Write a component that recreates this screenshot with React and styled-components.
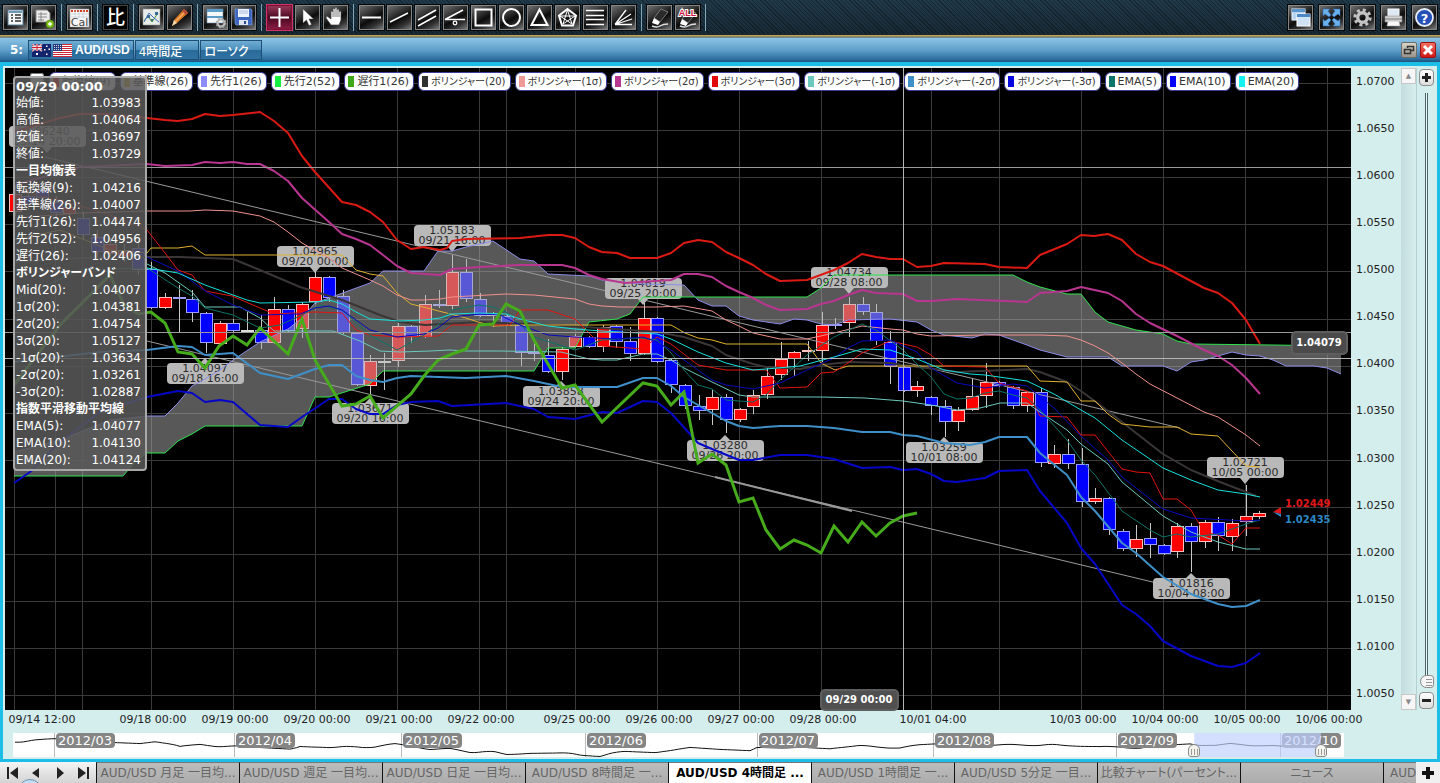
import { useState } from 'react';
import styled, { createGlobalStyle, css } from 'styled-components';

const FONT = `"DejaVu Sans", "Noto Sans CJK JP", sans-serif`;

const GlobalStyle = createGlobalStyle`
  * { box-sizing: border-box; }
  body {
    margin: 0;
    background: #1b2a35;
    font-family: ${FONT};
    font-feature-settings: "palt";
    font-size: 12px;
  }
  button, input { font-family: inherit; font-feature-settings: inherit; }
`;

const Page = styled.div`
  display: flex;
  flex-direction: column;
  overflow: hidden;
`;
const Toolbar = styled.header`
  display: flex;
  justify-content: space-between;
  height: 38px;
  padding: 4px 2px 0;
  background:
    linear-gradient(transparent 34px, #1a2830 34px, #1a2830 35px, #b99a50 35px, #c8a95e 36px, #59625c 37px, #7fb0cc 38px),
    repeating-linear-gradient(45deg, rgba(0, 0, 0, 0.3) 0 1px, transparent 1px 3px),
    linear-gradient(#213b4b, #172833);
`;
const ToolGroup = styled.div`
  display: flex;
  gap: ${p => p.$gap}px;
`;
const ToolButton = styled.button`
  width: 27px;
  height: 27px;
  padding: 0;
  border: 1px solid #06090b;
  box-shadow: inset 0 0 0 1px #858585;
  background: linear-gradient(150deg, #777 0%, #2b2b2b 40%, #0c0c0c 55%, #333 75%, #888 100%);
  svg { display: block; width: 25px; height: 25px; }
  ${p => p.$black && css`
    background: #000;
    box-shadow: inset 0 0 0 1px #444;
    color: #fff;
    font-size: 19px;
    font-weight: 500;
    line-height: 23px;
  `}
  ${p => p.$active && css`
    border-color: #d0356a;
    box-shadow: inset 0 0 0 1px #7c0d35;
    background: linear-gradient(#9c3c5c, #4a0820 50%, #8f1e46);
  `}
`;
const Separator = styled.span`
  width: 7px;
  height: 27px;
  background: linear-gradient(90deg, transparent 3px, #7ea6b8 3px, #7ea6b8 4px, transparent 4px);
`;
const TitleBar = styled.div`
  display: flex;
  align-items: center;
  height: 24px;
  padding: 0 4px 0 10px;
  background: linear-gradient(#8cc4e4, #5f9fca 50%, #2a6c9c 90%, #1d5078);
`;
const WindowNumber = styled.strong`
  width: 18px;
  color: #fff;
`;
const TitleButton = styled.button`
  display: flex;
  align-items: center;
  gap: 2px;
  height: 20px;
  margin-right: 1px;
  padding: 0 ${p => p.$end}px 0 3px;
  border: 1px solid #1f4f74;
  background: linear-gradient(#6fadd3, #4b8fbd 50%, #2a6a99 51%, #2f73a3);
  color: #fff;
  font-size: 12px;
  font-weight: 500;
  white-space: nowrap;
  b { font-family: "Liberation Sans", sans-serif; font-size: 12px; }
`;
const WindowControls = styled.div`
  display: flex;
  gap: 3px;
  margin-left: auto;
`;
const WindowButton = styled.button`
  width: 16px;
  height: 16px;
  padding: 0;
  border: 1px solid ${p => (p.$close ? '#a01010' : '#6d6d6d')};
  border-radius: 2px;
  background: ${p => (p.$close ? 'linear-gradient(#f07060, #d01818)' : 'linear-gradient(#d8d4c8, #98948c)')};
  svg { display: block; }
`;
const Frame = styled.main`
  padding: 4px 3px 3px;
  background: #1cbde6;
`;
const Body = styled.div`
  padding: 2px 0 2px 2px;
  background: #d4eded;
`;
const ChartRow = styled.div`
  display: flex;
`;
const ChartPane = styled.section`
  position: relative;
  flex: 1;
  min-width: 0;
`;
const ChartSvg = styled.svg`
  display: block;
  width: 100%;
  height: auto;
  overflow: visible;
  font-family: ${FONT};
`;
const Legend = styled.div`
  position: absolute;
  top: 4px;
  left: 25px;
  display: flex;
  gap: 4px;
`;
const LegendToggle = styled.input`
  width: 14px;
  height: 14px;
  margin: 1px 1px 0 0;
`;
const LegendItem = styled.span`
  display: flex;
  align-items: center;
  gap: 3px;
  height: 19px;
  padding: 0 4px 0 3px;
  border: 1px solid #3c3c9c;
  border-radius: 6px;
  background: #fff;
  color: #333;
  font-size: ${p => (p.$compact ? 10 : 11)}px;
  line-height: 17px;
  white-space: nowrap;
  &::before {
    content: "";
    width: 6px;
    height: 11px;
    background: ${p => p.$color};
  }
`;
const DataPanel = styled.div`
  position: absolute;
  top: 8px;
  left: 8px;
  width: 134px;
  padding: 0 4px 0 1px;
  border: 2px solid #a8a8a8;
  border-radius: 4px;
  background: rgba(88, 88, 88, 0.87);
  color: #fff;
  line-height: 17px;
`;
const DataTime = styled.div`
  font-size: 13px;
  font-weight: bold;
  white-space: nowrap;
`;
const DataTable = styled.table`
  width: 100%;
  border-collapse: collapse;
  th, td { height: 17px; padding: 0; line-height: 17px; white-space: nowrap; }
  th { font-weight: normal; text-align: left; }
  th[colspan] { font-weight: bold; }
  td { text-align: right; }
`;
const SideColumn = styled.aside`
  display: grid;
  grid-template-columns: 50px 16px 20px;
  margin-bottom: 20px;
`;
const PriceScale = styled.div`
  display: flex;
  flex-direction: column;
  justify-content: space-between;
  padding: 7px 0 9px 5px;
  color: #222;
  font-size: 11px;
  line-height: 14px;
`;
const ScrollTrack = styled.div`
  display: flex;
  flex-direction: column;
  justify-content: space-between;
  border-right: 1px solid #b5d0d2;
  background: linear-gradient(90deg, #c3dcde, #d8eeee);
`;
const ScrollButton = styled.button`
  height: 16px;
  padding: 0;
  border: 1px solid #c8c8c8;
  background: #f6f6f6;
  color: #888;
  font-size: 7px;
  line-height: 14px;
`;
const ZoomColumn = styled.div`
  display: flex;
  flex-direction: column;
  align-items: center;
  padding: 1px 1px 1px 0;
`;
const ZoomButton = styled.button`
  width: 15px;
  height: 17px;
  padding: 0;
  border: 1px solid #8c8c8c;
  border-radius: 4px;
  background: linear-gradient(#fff, #ddd);
  svg { display: block; margin: auto; }
`;
const ZoomSlider = styled.input`
  flex: 1;
  width: 15px;
  min-height: 0;
  margin: 7px 0 4px;
  appearance: none;
  background: linear-gradient(90deg, transparent 6px, #4c6466 6px, #4c6466 7px, #e8f8f8 7px, #e8f8f8 8px, #4c6466 8px, #4c6466 9px, transparent 9px);
  writing-mode: vertical-lr;
  direction: rtl;
  &::-webkit-slider-thumb {
    appearance: none;
    width: 14px;
    height: 13px;
    border: 1px solid #888;
    border-radius: 8px 4px 4px 8px;
    background:
      repeating-linear-gradient(transparent 0 2px, #999 2px 3px) 5px 1px / 6px 9px no-repeat,
      #f6f6f6;
  }
`;
const Navigator = styled.div`
  position: relative;
  margin: 3px 93px 0 8px;
  svg { display: block; width: 100%; height: auto; background: #fff; }
`;
const RangeHandle = styled.input`
  position: absolute;
  bottom: 0;
  left: 0;
  width: 100%;
  height: 14px;
  margin: 0;
  appearance: none;
  background: none;
  pointer-events: none;
  &::-webkit-slider-thumb {
    appearance: none;
    width: 12px;
    height: 13px;
    border: 1px solid #888;
    border-radius: 6px 6px 3px 3px;
    background:
      repeating-linear-gradient(90deg, #999 0 1px, transparent 1px 3px) 2px 4px / 7px 6px no-repeat,
      #f4f4ec;
    pointer-events: auto;
  }
`;
const TabBar = styled.nav`
  position: relative;
  display: flex;
  height: 21px;
  overflow: hidden;
  background: #b4b4b4;
`;
const Pager = styled.div`
  display: flex;
  flex: 0 0 96px;
  background: linear-gradient(#f4f4f4, #d4d4d4);
`;
const PagerButton = styled.button`
  width: 24px;
  padding: 0;
  border: 0;
  background: none;
  svg { display: block; margin: auto; }
`;
const Tab = styled.button`
  flex: 0 0 143px;
  padding: 0 2px;
  border: 0;
  border-top: 1px solid #777;
  border-left: 1px solid #111;
  background: ${p => (p.$active ? '#fff' : 'linear-gradient(#bcbcbc, #acacac)')};
  color: ${p => (p.$active ? '#000' : '#666')};
  font-size: 12px;
  font-weight: ${p => (p.$active ? 'bold' : 'normal')};
  line-height: 18px;
  white-space: nowrap;
  overflow: hidden;
`;
const TabSpill = styled(Tab)`
  flex: 1 1 32px;
  min-width: 0;
  padding-left: 6px;
  text-align: left;
`;
const AddTab = styled.button`
  flex: 0 0 24px;
  padding: 0;
  border: 0;
  background: #f0f0f0;
  svg { display: block; margin: auto; }
`;
const RoundKnob = styled.button`
  position: absolute;
  top: 17px;
  left: 18px;
  width: 24px;
  height: 24px;
  padding: 0;
  border: 1px solid #6f93b4;
  border-radius: 50%;
  background: #c4dcf0;
`;

const GRID_X = [14, 55, 82, 151, 233, 315, 397, 479, 506, 575, 657, 739, 821, 931, 999, 1081, 1163, 1245, 1327];
const PRICES = Array.from({ length: 14 }, (_, i) => (1.07 - i * 0.005).toFixed(4));
const priceY = i => Math.round(83 + i * 47.1);

const TIMES = [
  [42, '09/14 12:00'], [153, '09/18 00:00'], [235, '09/19 00:00'], [317, '09/20 00:00'],
  [399, '09/21 00:00'], [481, '09/22 00:00'], [577, '09/25 00:00'], [659, '09/26 00:00'],
  [741, '09/27 00:00'], [823, '09/28 00:00'], [933, '10/01 04:00'], [1083, '10/03 00:00'],
  [1165, '10/04 00:00'], [1247, '10/05 00:00'], [1329, '10/06 00:00'],
];

// direction, body top, body bottom, high, low
const CANDLES = [
  ['r', 194, 212, 186, 216], ['b', 196, 204, 190, 210], ['b', 190, 198, 184, 204], ['b', 202, 213, 196, 218],
  ['r', 207, 214, 200, 220], ['b', 218, 235, 212, 240], ['b', 237, 252, 230, 258], ['r', 244, 254, 238, 260],
  ['r', 250, 257, 244, 262], ['b', 248, 270, 240, 275],
  ['b', 269, 308, 262, 309], ['r', 297, 308, 293, 309], ['b', 297, 299, 285, 332], ['b', 299, 313, 290, 322],
  ['b', 313, 343, 312, 353], ['r', 323, 344, 321, 346], ['b', 323, 331, 319, 333], ['w', 330, 331, 312, 333],
  ['b', 330, 343, 315, 349], ['r', 309, 343, 297, 344], ['b', 309, 331, 305, 333], ['r', 304, 329, 302, 338],
  ['r', 277, 302, 270, 304], ['b', 277, 298, 276, 302], ['b', 296, 333, 290, 334], ['b', 333, 385, 333, 386],
  ['r', 361, 386, 355, 396], ['w', 361, 362, 353, 390], ['r', 326, 361, 323, 367], ['b', 326, 337, 325, 343],
  ['r', 304, 337, 295, 338], ['b', 304, 306, 290, 308], ['r', 272, 306, 255, 310], ['b', 272, 299, 259, 302],
  ['b', 299, 316, 293, 317], ['w', 314, 315, 312, 327], ['b', 316, 323, 315, 325], ['b', 325, 353, 324, 366],
  ['b', 352, 354, 342, 361], ['b', 355, 372, 339, 373], ['r', 349, 372, 347, 380], ['r', 336, 347, 334, 348],
  ['b', 337, 347, 336, 348], ['r', 327, 347, 325, 352], ['b', 326, 342, 325, 348], ['b', 341, 354, 327, 361],
  ['r', 318, 354, 303, 355], ['b', 318, 362, 317, 363], ['b', 360, 385, 359, 393], ['b', 385, 406, 384, 409],
  ['b', 406, 411, 395, 420], ['r', 397, 410, 390, 425], ['b', 397, 420, 394, 433], ['r', 409, 420, 408, 422],
  ['r', 395, 407, 390, 414], ['r', 376, 395, 368, 399], ['r', 359, 375, 342, 380], ['r', 352, 359, 351, 376],
  ['r', 350, 352, 341, 361], ['r', 325, 351, 312, 362], ['b', 324, 326, 318, 329], ['r', 304, 323, 297, 337],
  ['b', 304, 312, 297, 315], ['b', 312, 341, 304, 345], ['b', 342, 367, 331, 384], ['b', 367, 391, 366, 392],
  ['r', 386, 391, 381, 397], ['b', 397, 406, 396, 415], ['b', 406, 422, 400, 437], ['r', 410, 422, 407, 431],
  ['r', 396, 410, 378, 411], ['r', 382, 396, 363, 408], ['b', 382, 386, 381, 387], ['b', 387, 406, 386, 409],
  ['r', 392, 406, 391, 412], ['b', 392, 463, 388, 467], ['r', 454, 464, 445, 468], ['b', 454, 464, 439, 469],
  ['b', 464, 502, 448, 507], ['r', 498, 502, 488, 504], ['b', 498, 530, 497, 535], ['b', 531, 549, 529, 551],
  ['r', 539, 549, 525, 557], ['b', 538, 545, 523, 558], ['b', 545, 554, 544, 555], ['r', 526, 552, 523, 558],
  ['b', 526, 542, 523, 572], ['r', 522, 542, 520, 548], ['b', 522, 536, 517, 551], ['r', 523, 537, 519, 551],
  ['r', 516, 522, 485, 536], ['r', 513, 517, 511, 519],
];
const CANDLE_COLORS = {
  r: ['#ff0000', '#ffc0c0'],
  b: ['#0000ff', '#9c9cff'],
  w: ['#ffffff', '#dddddd'],
};
const candleX = i => Math.round(14.5 + i * 13.68);

const SPAN_A = '14,452 60,440 110,420 147,416 165,416 178,403 192,386 205,379 220,370 233,360 260,342 288,329 302,318 315,303 329,298 370,283 383,271 424,271 438,251 452,251 466,247 493,241 520,259 534,261 548,274 589,276 602,280 643,284 684,285 698,300 712,306 726,306 739,316 753,320 780,324 794,319 807,320 821,324 834,325 848,320 890,319 917,322 931,330 944,335 972,338 985,334 999,335 1027,345 1040,350 1067,357 1108,357 1122,366 1163,366 1177,371 1191,362 1204,360 1232,352 1246,355 1260,356 1273,360 1286,366 1314,366 1327,368 1341,374';
const SPAN_B = '14,476 123,476 135,462 147,453 165,453 178,441 192,434 205,426 302,426 315,397 329,397 370,384 383,371 534,371 548,348 575,348 589,322 617,319 630,314 643,297 807,297 821,288 834,275 1013,275 1027,282 1040,287 1067,294 1081,294 1095,312 1108,322 1136,330 1163,334 1177,341 1191,344 1273,345 1341,346';
const CLOUD = `${SPAN_A} ${SPAN_B.split(' ').reverse().join(' ')}`;

// colour, stroke width, points
const LINES = [
  ['#8c8ce8', 1, SPAN_A],
  ['#2fe04c', 1, SPAN_B],
  ['#3a3636', 2, '14,262 80,258 147,257 180,257 233,259 260,270 300,287 342,300 380,315 400,322 425,325 480,322 550,325 600,328 630,330 657,332 684,337 712,346 726,355 753,364 766,367 800,369 821,365 848,362 890,363 917,367 944,370 957,372 1027,369 1040,372 1067,382 1081,391 1108,411 1136,433 1163,454 1191,470 1220,482 1246,492 1256,496'],
  ['#e0b030', 1, '14,240 60,230 110,250 147,253 151,248 178,248 192,246 205,255 342,255 356,270 370,274 383,276 397,293 411,304 431,309 466,318 478,322 493,326 520,325 671,325 685,333 698,338 712,340 726,344 807,344 821,363 835,370 848,366 1027,366 1040,381 1067,382 1081,401 1095,401 1108,414 1122,424 1150,427 1177,427 1191,434 1218,436 1232,451 1246,466 1260,467'],
  ['#e01410', 1, '14,190 60,200 110,215 147,230 165,253 178,270 192,275 205,291 232,296 260,308 274,314 315,312 342,313 356,330 370,335 400,337 438,336 452,325 510,325 520,310 548,310 575,319 589,333 602,346 643,349 657,337 671,344 698,365 726,370 766,370 780,388 807,387 821,373 834,372 848,363 862,353 890,341 917,347 931,355 944,366 985,367 999,383 1027,391 1040,416 1067,417 1081,435 1095,435 1122,469 1136,472 1150,473 1163,499 1177,499 1191,510 1204,532 1218,535 1232,544 1246,528 1260,528'],
  ['#f0918c', 1, '14,218 80,213 147,211 190,211 205,210 233,211 260,216 274,222 288,232 302,243 329,258 342,268 370,280 383,286 397,295 411,300 424,300 440,299 452,297 470,296 506,294 534,295 575,299 589,304 602,306 620,307 657,307 684,306 712,311 726,320 739,326 753,333 780,339 807,339 834,333 862,326 890,329 903,330 917,334 931,336 985,335 1040,335 1067,336 1081,340 1095,346 1108,353 1122,363 1136,374 1150,384 1204,412 1218,417 1232,426 1246,435 1260,446'],
  ['#b83590', 2, '14,185 80,167 147,164 165,166 192,165 205,162 220,163 233,162 247,164 260,164 274,171 288,181 302,198 329,222 342,234 356,239 370,245 383,255 397,266 411,273 440,275 452,269 480,267 520,265 562,265 575,268 589,275 602,279 625,283 671,280 684,274 698,274 712,277 726,286 739,292 753,298 766,305 780,310 807,309 821,304 834,301 848,295 862,290 876,293 903,294 917,301 931,301 957,299 1027,302 1040,293 1067,291 1081,287 1108,293 1122,301 1136,314 1150,323 1177,336 1204,350 1218,356 1232,365 1246,378 1260,394'],
  ['#dc1a14', 2, '14,132 60,118 80,114 110,114 147,118 165,120 178,121 192,119 205,114 220,116 233,115 260,112 274,121 288,133 302,156 315,172 342,202 356,205 370,212 383,222 397,240 411,249 424,247 440,250 447,248 452,241 466,239 520,238 548,235 562,235 575,238 589,247 602,252 617,253 630,258 657,258 671,253 684,243 698,240 712,242 726,252 739,258 753,265 766,274 780,281 807,280 834,270 848,263 862,254 876,257 890,259 903,259 917,267 931,266 944,263 985,264 999,267 1027,268 1040,255 1067,244 1081,235 1094,236 1108,234 1122,240 1136,254 1150,262 1163,266 1204,288 1218,293 1232,303 1246,320 1260,344'],
  ['#6cc8bc', 1, '147,264 165,273 192,292 205,307 240,307 260,318 274,331 333,331 360,341 380,351 400,352 430,351 450,350 466,351 500,351 561,352 589,359 602,360 617,360 643,354 657,354 671,360 684,368 712,382 739,395 753,397 820,397 865,398 903,401 931,405 957,410 980,408 1000,403 1027,403 1040,412 1067,430 1081,444 1108,464 1122,482 1163,516 1191,532 1218,542 1246,549 1260,549'],
  ['#0c7468', 1, '14,300 80,270 147,268 178,288 192,296 205,308 233,315 260,328 280,325 300,316 320,305 342,310 370,335 397,350 424,335 438,325 452,310 479,305 493,307 506,312 534,337 575,350 602,340 640,338 657,340 671,353 684,370 698,385 712,389 726,400 753,402 766,395 780,380 807,355 834,337 862,324 876,330 903,350 917,364 931,377 944,394 957,399 970,398 985,393 999,391 1013,395 1027,398 1040,410 1067,440 1081,460 1095,475 1122,511 1150,530 1163,537 1177,534 1191,537 1218,534 1246,524 1260,520'],
  ['#0808c0', 1, '147,257 180,272 205,291 233,305 260,315 300,314 315,308 329,306 342,310 370,330 397,337 424,334 438,328 452,317 480,314 500,315 520,325 548,335 575,337 617,339 643,337 657,342 671,350 684,360 698,370 712,380 726,385 753,389 780,383 807,370 834,358 848,348 862,341 890,340 917,352 931,368 957,383 985,388 1013,384 1027,386 1054,408 1081,436 1108,460 1122,477 1163,509 1191,518 1246,521 1260,520'],
  ['#16e0dc', 1, '147,268 178,273 205,285 247,300 260,303 315,302 329,300 342,304 356,312 370,319 400,321 424,320 440,318 452,314 480,313 506,314 520,319 548,326 575,329 602,331 657,334 671,339 698,352 726,363 753,370 766,369 800,366 834,357 862,349 890,350 917,359 944,370 970,374 985,375 1027,381 1054,394 1081,410 1095,418 1122,440 1163,468 1191,480 1218,490 1246,494 1260,497'],
  ['#3f8fc8', 2, '14,362 100,352 147,350 178,346 192,347 205,355 233,353 260,373 288,379 315,369 329,365 342,365 356,376 370,380 383,382 397,378 411,376 466,378 506,376 534,381 562,387 617,387 643,378 657,378 671,386 684,397 712,413 726,421 739,426 753,428 780,426 807,426 834,428 862,432 890,432 903,435 917,436 944,443 970,445 985,442 999,437 1027,437 1040,453 1067,475 1081,497 1095,511 1122,543 1136,553 1163,577 1191,594 1218,604 1232,607 1246,606 1260,600'],
  ['#0606c8', 2, '14,483 30,472 60,442 100,412 147,397 178,391 192,393 205,402 220,400 233,402 260,425 288,427 302,417 329,399 342,399 356,409 370,414 383,414 397,405 411,402 438,401 452,406 506,403 534,409 548,417 575,419 602,412 617,413 643,401 657,402 671,413 698,443 712,449 739,460 753,460 780,455 807,455 834,459 862,468 890,467 903,470 917,469 931,474 944,481 957,482 985,478 999,471 1027,470 1040,491 1067,523 1081,548 1095,564 1122,605 1136,614 1150,626 1163,641 1191,656 1218,666 1232,667 1246,663 1260,653'],
];
const LAGGING = '14,385 60,325 85,300 110,275 124,305 138,314 151,312 165,323 178,352 192,354 205,368 219,346 233,336 247,345 260,328 288,354 302,319 315,360 342,406 356,404 370,396 383,418 411,394 424,376 438,360 452,354 466,349 479,325 493,324 506,304 520,311 534,340 562,388 575,385 602,422 643,383 657,386 671,405 684,392 698,463 712,454 726,465 739,502 753,498 766,530 780,549 794,540 807,545 821,553 834,526 848,542 862,522 876,536 890,523 903,516 917,513';

// centre x, top, tip below the box, price, time
const CALLOUTS = [
  [47, 126, true, '1.06240', '09/14 20:00'],
  [315, 246, true, '1.04965', '09/20 00:00'],
  [452, 225, true, '1.05183', '09/21 16:00'],
  [643, 278, true, '1.04619', '09/25 20:00'],
  [849, 267, true, '1.04734', '09/28 08:00'],
  [1245, 457, true, '1.02721', '10/05 00:00'],
  [205, 363, false, '1.04097', '09/18 16:00'],
  [370, 403, false, '1.03671', '09/20 16:00'],
  [561, 386, false, '1.03858', '09/24 20:00'],
  [725, 440, false, '1.03280', '09/26 20:00'],
  [944, 442, false, '1.03259', '10/01 08:00'],
  [1191, 578, false, '1.01816', '10/04 08:00'],
];

const LEGEND = [
  ['#ff0000', '転換線(9)'], ['#e0b030', '基準線(26)'], ['#8c8cff', '先行1(26)'], ['#16f040', '先行2(52)'],
  ['#40a818', '遅行1(26)'], ['#303030', 'ボリンジャー(20)'], ['#f09a98', 'ボリンジャー(1σ)'], ['#b83590', 'ボリンジャー(2σ)'],
  ['#e00808', 'ボリンジャー(3σ)'], ['#6cc8bc', 'ボリンジャー(-1σ)'], ['#3f8fc8', 'ボリンジャー(-2σ)'], ['#0606e0', 'ボリンジャー(-3σ)'],
  ['#0c7468', 'EMA(5)'], ['#0000ff', 'EMA(10)'], ['#16f0f0', 'EMA(20)'],
];

const READOUT = [
  ['始値:', '1.03983'], ['高値:', '1.04064'], ['安値:', '1.03697'], ['終値:', '1.03729'],
  ['一目均衡表'],
  ['転換線(9):', '1.04216'], ['基準線(26):', '1.04007'], ['先行1(26):', '1.04474'], ['先行2(52):', '1.04956'], ['遅行(26):', '1.02406'],
  ['ボリンジャーバンド'],
  ['Mid(20):', '1.04007'], ['1σ(20):', '1.04381'], ['2σ(20):', '1.04754'], ['3σ(20):', '1.05127'],
  ['-1σ(20):', '1.03634'], ['-2σ(20):', '1.03261'], ['-3σ(20):', '1.02887'],
  ['指数平滑移動平均線'],
  ['EMA(5):', '1.04077'], ['EMA(10):', '1.04130'], ['EMA(20):', '1.04124'],
];

const MONTHS = [[54, '2012/03'], [234, '2012/04'], [401, '2012/05'], [585, '2012/06'], [757, '2012/07'], [933, '2012/08'], [1116, '2012/09'], [1280, '2012/10']];
const NAV_KNOTS = [[15, 742], [40, 740], [55, 739], [62, 742], [80, 740], [110, 743], [140, 744], [155, 742], [170, 744], [180, 747], [200, 744], [215, 746], [260, 747], [290, 749], [300, 746], [330, 747], [375, 747], [395, 744], [410, 746], [430, 749], [450, 749], [470, 752], [495, 752], [507, 754], [530, 753], [560, 753], [585, 755], [600, 756], [625, 751], [655, 752], [690, 748], [720, 750], [750, 751], [757, 748], [800, 747], [830, 749], [860, 746], [900, 748], [920, 745], [935, 744], [1000, 745], [1040, 745], [1065, 745], [1100, 747], [1120, 747], [1140, 748], [1160, 746], [1190, 744], [1215, 746], [1230, 744], [1250, 745], [1290, 747], [1300, 748], [1320, 746]];
const navLine = NAV_KNOTS.slice(1).flatMap(([x, y], i) => {
  const [px, py] = NAV_KNOTS[i];
  const steps = Math.max(1, Math.round((x - px) / 4));
  return Array.from({ length: steps }, (_, s) => {
    const nx = px + ((x - px) * s) / steps;
    const ny = py + ((y - py) * s) / steps + Math.sin(nx * 1.7) * 0.6;
    return `${nx.toFixed(1)},${ny.toFixed(1)}`;
  });
}).join(' ');

const TABS = ['AUD/USD 月足 一目均...', 'AUD/USD 週足 一目均...', 'AUD/USD 日足 一目均...', 'AUD/USD 8時間足 一...', 'AUD/USD 4時間足 ...', 'AUD/USD 1時間足 一...', 'AUD/USD 5分足 一目...', '比較チャート(パーセント...', 'ニュース'];

const eraser = y => (
  <>
    <path d={`M7 ${y + 9}L14 ${y}L21 ${y + 3}L13 ${y + 13}Z`} fill="#2a2a2a" stroke="#999" strokeWidth=".7" />
    <path d={`M7 ${y + 9}l6 4-2 3-6-2Z`} fill="#fff" />
    <path d="M5 21q5 2 8 0t8-2" fill="none" stroke="#ddd" strokeWidth="1.4" />
  </>
);

const ICONS = {
  list: (
    <>
      <rect x="5" y="5" width="15" height="15" fill="#f4f8fa" stroke="#5c8098" />
      <path d="M6 6h13v2H6Z" fill="#6d98b4" />
      <path d="M8 10h2M8 13h2M8 16h2M12 10h6M12 13h6M12 16h6" stroke="#333" strokeWidth="1.3" />
    </>
  ),
  addSheet: (
    <>
      <path d="M5 5h11l3 3v9H5Z" fill="#ececec" stroke="#888" />
      <path d="M7 9h9M7 12h9M7 15h6M10 7v9" stroke="#888" />
      <circle cx="19" cy="19" r="4" fill="#7dc01c" stroke="#4d8208" strokeWidth=".6" />
      <path d="M19 17v4M17 19h4" stroke="#fff" strokeWidth="1.3" />
    </>
  ),
  calendar: (
    <>
      <rect x="3" y="4" width="19" height="18" fill="#f8f8f8" stroke="#999" strokeWidth=".6" />
      <path d="M4 6h17" stroke="#d04020" strokeWidth="2" strokeDasharray="2 1" />
      <path d="M4 9h17M4 12h17M8 5v8M12 5v8M16 5v8" stroke="#b8c4cc" strokeWidth=".6" />
      <text x="12.5" y="21" textAnchor="middle" fontSize="11" fill="#444">Cal</text>
    </>
  ),
  compareLines: (
    <>
      <rect x="4" y="4" width="17" height="16" fill="#e8ece8" stroke="#999" strokeWidth=".6" />
      <path d="M5 16l4-5 4 6 6-9" fill="none" stroke="#4a9a28" />
      <path d="M5 17l5-9 4 4 6 5" fill="none" stroke="#446ab8" />
      <path d="M8 10h3v3H8ZM12 14h2v2h-2ZM16 7h3v3h-3Z" fill="#3a6a9a" />
    </>
  ),
  pencil: (
    <>
      <path d="M5 21l2-6L17 4l4 4L10 18Z" fill="#d87828" />
      <path d="M8.500 16.500L19 6" stroke="#f4b060" strokeWidth="1.5" />
      <path d="M15 6l4 4 2-2-4-4Z" fill="#b84838" />
      <path d="M5 21l2-6 3 3Z" fill="#f0d8b0" />
    </>
  ),
  sheetGear: (
    <>
      <rect x="4" y="4" width="16" height="14" fill="#f4f8fc" stroke="#789" strokeWidth=".6" />
      <path d="M4 4h16v3H4ZM4 11h16v2H4Z" fill="#5e9cc8" />
      <circle cx="18" cy="18" r="3.500" fill="none" stroke="#bbb" strokeWidth="2.200" />
      <circle cx="18" cy="18" r="4.600" fill="none" stroke="#aaa" strokeWidth="1.500" strokeDasharray="1.800 1.800" />
    </>
  ),
  save: (
    <>
      <path d="M4 4h16l1 1v15H5l-1-1Z" fill="#3c66c0" stroke="#88a8e0" strokeWidth=".6" />
      <rect x="7" y="4" width="11" height="8" fill="#eef4fc" />
      <path d="M8 6h9M8 8h9" stroke="#9cb4d8" strokeWidth=".8" />
      <rect x="8" y="15" width="9" height="5" fill="#dde4f0" />
      <rect x="13" y="16" width="2" height="3" fill="#2a4a90" />
    </>
  ),
  cross: <path d="M12.500 3v19M3 12.500h19" stroke="#fff" strokeWidth="2" />,
  pointer: <path d="M8 4v14l3.500-3 2.500 5.500 2.500-1-2.500-5.500h4.500Z" fill="#fff" stroke="#555" strokeWidth=".5" />,
  hand: <path d="M8 20l-5-7c0-1.500 1.500-1.800 2.500-.8L8 14V7c0-1.500 2-1.500 2 0V4.500c0-1.500 2-1.500 2 0v-.8c0-1.500 2-1.500 2 0V5c0-1.500 2-1.500 2 0v2c0-1.500 2-1.500 2 0v8l-2 5Z M10 7v5M12 5v7M14 5v7M16 7v5" fill="#fff" stroke="#444" strokeWidth=".7" />,
  hline: <path d="M3 12.500h19" stroke="#fff" strokeWidth="2" />,
  trend: <path d="M3 17L21 8" stroke="#fff" strokeWidth="1.500" />,
  channel: <path d="M3 15L21 5M3 21L21 11" stroke="#fff" strokeWidth="1.500" />,
  angle: (
    <>
      <path d="M2 14.500h20M2 14.500L20 5" stroke="#fff" strokeWidth="1.500" />
      <circle cx="12" cy="18" r="1.800" fill="none" stroke="#fff" strokeWidth="1.300" />
    </>
  ),
  square: <rect x="4.500" y="4.500" width="16" height="16" fill="none" stroke="#fff" strokeWidth="2" />,
  circle: <circle cx="12.500" cy="12.500" r="8.500" fill="none" stroke="#fff" strokeWidth="2" />,
  triangle: <path d="M12.500 4.500L20.500 20H4.500Z" fill="none" stroke="#fff" strokeWidth="2" />,
  pentagon: (
    <>
      <path d="M12.500 4L21 10.500 18 20.500H7L4 10.500Z" fill="none" stroke="#fff" strokeWidth="2" />
      <path d="M12.500 5L17 19 5 11h15L8 19Z" fill="none" stroke="#fff" strokeWidth="1" />
    </>
  ),
  levels: <path d="M3 5.500h18M3 10.500h18M3 14.500h18M3 19.500h18" stroke="#fff" strokeWidth="1.300" />,
  fan: <path d="M4 19.500h17M4 19.500L21 14M4 19.500L20 9M4 19.500L15 5" stroke="#fff" strokeWidth="1.300" />,
  eraser: eraser(4),
  eraseAll: (
    <>
      {eraser(5)}
      <text x="12.500" y="11" textAnchor="middle" fontSize="9" fontWeight="bold" fill="#d01848" stroke="#fff" strokeWidth="2" paintOrder="stroke" fontFamily="Liberation Sans">ALL</text>
    </>
  ),
  windows: (
    <>
      <rect x="4" y="4" width="13" height="11" fill="#b8d4f0" stroke="#f4f8fc" />
      <path d="M4 4h13v3H4Z" fill="#5a94cc" />
      <rect x="9" y="9" width="13" height="12" fill="#cfe2f4" stroke="#fff" />
      <path d="M9 9h13v3H9Z" fill="#4c88c4" />
    </>
  ),
  expand: (
    <path d="M4 4h7L9 6l3 4-2 2-4-3-2 2ZM21 4h-7l2 2-3 4 2 2 4-3 2 2ZM4 21h7l-2-2 3-4-2-2-4 3-2-2ZM21 21h-7l2-2-3-4 2-2 4 3 2-2Z" fill="#6ab0ec" stroke="#2c68a8" strokeWidth=".5" />
  ),
  gear: (
    <>
      <circle cx="12.500" cy="12.500" r="7.600" fill="none" stroke="#c4c4c4" strokeWidth="3" strokeDasharray="3 2.970" />
      <circle cx="12.500" cy="12.500" r="4.800" fill="none" stroke="#c4c4c4" strokeWidth="3.400" />
    </>
  ),
  printer: (
    <>
      <rect x="7" y="4" width="11" height="7" fill="#dce8f4" stroke="#fff" />
      <path d="M4 11h17v6H4Z" fill="#d4d4d4" stroke="#888" strokeWidth=".6" />
      <path d="M4 14h17" stroke="#777" />
      <path d="M7 16h11l1 5H6Z" fill="#f8f8f8" stroke="#aaa" strokeWidth=".6" />
    </>
  ),
  help: (
    <>
      <circle cx="12.500" cy="12.500" r="8.500" fill="#2450b8" stroke="#e8eefc" strokeWidth="1.800" />
      <text x="12.500" y="17.500" textAnchor="middle" fontSize="13" fontWeight="bold" fill="#fff">?</text>
    </>
  ),
};

const TOOL_GROUPS = [
  [['list', '一覧'], ['addSheet', '追加']],
  [['calendar', 'カレンダー']],
  [['compare', '比較']],
  [['compareLines', 'テクニカル'], ['pencil', '描画']],
  [['sheetGear', '設定'], ['save', '保存']],
  [['cross', '十字'], ['pointer', '選択'], ['hand', '移動']],
  [['hline', '水平線'], ['trend', 'トレンドライン'], ['channel', 'チャネル'], ['angle', '角度'], ['square', '四角'], ['circle', '円'], ['triangle', '三角'], ['pentagon', '五角'], ['levels', 'フィボナッチ'], ['fan', 'ファン']],
  [['eraser', '消去'], ['eraseAll', '全消去']],
];
const WINDOW_TOOLS = [['windows', '整列'], ['expand', '最大化'], ['gear', '環境設定'], ['printer', '印刷'], ['help', 'ヘルプ']];

function Tool({ icon, label }) {
  return (
    <ToolButton aria-label={label} $black={icon === 'compare'} $active={icon === 'cross'}>
      {icon === 'compare' ? '比' : <svg viewBox="0 0 25 25">{ICONS[icon]}</svg>}
    </ToolButton>
  );
}

function Flags() {
  return (
    <svg width="41" height="13" viewBox="0 0 41 13">
      <rect width="19" height="13" fill="#14246c" />
      <path d="M0 0l10 7M10 0L0 7" stroke="#fff" strokeWidth="1.600" />
      <path d="M0 0l10 7M10 0L0 7" stroke="#d02030" strokeWidth=".6" />
      <path d="M5 0v7M0 3.500h10" stroke="#fff" strokeWidth="2.400" />
      <path d="M5 0v7M0 3.500h10" stroke="#d02030" strokeWidth="1.200" />
      <path d="M4 9h2v2H4ZM14 1.500h1.500v1.500H14ZM12 5h1.500v1.500H12ZM16.500 4.500H18V6h-1.500ZM14 9.500h1.500V11H14Z" fill="#fff" />
      <rect x="21" width="19" height="13" fill="#fff" />
      <path d="M21 .5h19M21 2.500h19M21 4.500h19M21 6.500h19M21 8.500h19M21 10.500h19M21 12.500h19" stroke="#c82838" />
      <rect x="21" width="9" height="7" fill="#283c80" />
      <path d="M22 1.500h7M22 3.500h7M22 5.500h7" stroke="#fff" strokeWidth=".8" strokeDasharray="1 1" />
    </svg>
  );
}

function Callout({ x, y, down, price, time }) {
  return (
    <g>
      <rect x={x - 38} y={y} width="77" height="21" rx="4" fill="#b9b9b9" />
      <path d={down ? `M${x - 5} ${y + 21}h10l-5 6Z` : `M${x - 5} ${y}h10l-5-5Z`} fill="#b9b9b9" />
      <g fontSize="11" fill="#2c2c2c" textAnchor="middle">
        <text x={x} y={y + 9}>{price}</text>
        <text x={x} y={y + 19}>{time}</text>
      </g>
    </g>
  );
}

function Chart() {
  return (
    <ChartSvg viewBox="5 68 1346 662" role="img" aria-label="AUD/USD">
      <rect x="5" y="68" width="1346" height="642" fill="#000" />
      <g stroke="#3a3a3a" shapeRendering="crispEdges">
        {GRID_X.map(x => <line key={x} x1={x + 0.5} x2={x + 0.5} y1="68" y2="710" />)}
        {PRICES.map((p, i) => <line key={p} x1="5" x2="1351" y1={priceY(i) + 0.5} y2={priceY(i) + 0.5} />)}
      </g>
      {CANDLES.map(([dir, top, bottom, high, low], i) => {
        const [fill, stroke] = CANDLE_COLORS[dir];
        const x = candleX(i);
        return (
          <g key={i} shapeRendering="crispEdges">
            <line x1={x + 0.5} x2={x + 0.5} y1={high} y2={low} stroke="#c8c8c8" />
            <rect x={x - 5.5} y={top + 0.5} width="12" height={Math.max(bottom - top - 1, 0.5)} fill={fill} stroke={stroke} />
          </g>
        );
      })}
      <polygon points={CLOUD} fill="#b0b0b0" fillOpacity="0.5" />
      <g stroke="#999" fill="none">
        <path d="M45 157L1180 428M147 341L1186 590" />
        <path d="M715 477L852 511" strokeWidth="2" />
      </g>
      {CALLOUTS.map(([x, y, down, price, time]) => (
        <Callout key={time} x={x} y={y} down={down} price={price} time={time} />
      ))}
      {LINES.map(([color, width, points], i) => (
        <polyline key={i} points={points} fill="none" stroke={color} strokeWidth={width} strokeLinejoin="round" />
      ))}
      <polyline points={LAGGING} fill="none" stroke="#46ac1c" strokeWidth="3" />
      <g stroke="#9a9a9a" shapeRendering="crispEdges">
        <path d="M5 167.500H1351M5 332.500H1351" />
        <path d="M5 358.500H1351M903.500 68V710" stroke="#b4b4b4" />
      </g>
      <path d="M1273 512l8-5v7Z" fill="#e01414" />
      <path d="M1273 512l8 2v3Z" fill="#2c88c4" />
      <g fontSize="10" fontWeight="bold">
        <text x="1285" y="507" fill="#e01818">1.02449</text>
        <text x="1285" y="523" fill="#2c88c4">1.02435</text>
        <rect x="1292" y="332" width="55" height="22" rx="4" fill="#4a4a4a" stroke="#5e5e5e" strokeWidth="2" />
        <text x="1319" y="346" fill="#fff" textAnchor="middle">1.04079</text>
        <rect x="821" y="690" width="77" height="20" rx="4" fill="#505050" stroke="#5e5e5e" strokeWidth="2" />
        <text x="859" y="703" fill="#fff" textAnchor="middle">09/29 00:00</text>
      </g>
      <g fontSize="11" fill="#222" textAnchor="middle">
        {TIMES.map(([x, t]) => <text key={t} x={x} y="723">{t}</text>)}
      </g>
    </ChartSvg>
  );
}

function App() {
  const [zoom, setZoom] = useState(0);
  const [from, setFrom] = useState(891);
  const [to, setTo] = useState(987);
  const [activeTab, setActiveTab] = useState(4);

  const selStart = 19 + from * 1.319;
  const selEnd = 19 + to * 1.319;

  return <Page lang="ja">
      <GlobalStyle />
      <Toolbar>
        <ToolGroup $gap={1}>
          {TOOL_GROUPS.map((group, i) => [
            ...group.map(([icon, label]) => <Tool key={icon} icon={icon} label={label} />),
            <Separator key={i} />,
          ])}
        </ToolGroup>
        <ToolGroup $gap={4}>
          {WINDOW_TOOLS.map(([icon, label]) => <Tool key={icon} icon={icon} label={label} />)}
        </ToolGroup>
      </Toolbar>

      <TitleBar>
        <WindowNumber>5:</WindowNumber>
        <TitleButton $end={3}><Flags /><b>AUD/USD</b></TitleButton>
        <TitleButton $end={16}>4時間足</TitleButton>
        <TitleButton $end={12}>ローソク</TitleButton>
        <WindowControls>
          <WindowButton aria-label="元に戻す">
            <svg width="14" height="14" fill="none" stroke="#333"><path d="M5.500 5V3.500h6v4H9M2.500 6.500h6v4h-6Z" strokeWidth="1.500" /></svg>
          </WindowButton>
          <WindowButton $close aria-label="閉じる">
            <svg width="14" height="14"><path d="M3 3l8 8M11 3l-8 8" stroke="#fff" strokeWidth="3" /></svg>
          </WindowButton>
        </WindowControls>
      </TitleBar>

      <Frame>
        <Body>
          <ChartRow>
            <ChartPane>
              <Chart />
              <Legend>
                <LegendToggle type="checkbox" aria-label="凡例" />
                {LEGEND.map(([color, text]) => (
                  <LegendItem key={text} $color={color} $compact={text.startsWith('ボ')}>{text}</LegendItem>
                ))}
              </Legend>
              <DataPanel>
                <DataTime>09/29 00:00</DataTime>
                <DataTable>
                  <tbody>
                    {READOUT.map(([label, value]) => (
                      <tr key={label}>
                        {value
                          ? <><th scope="row">{label}</th><td>{value}</td></>
                          : <th colSpan={2}>{label}</th>}
                      </tr>
                    ))}
                  </tbody>
                </DataTable>
              </DataPanel>
            </ChartPane>
            <SideColumn>
              <PriceScale>
                {PRICES.map(p => <span key={p}>{p}</span>)}
              </PriceScale>
              <ScrollTrack>
                <ScrollButton aria-label="上へ">▲</ScrollButton>
                <ScrollButton aria-label="下へ">▼</ScrollButton>
              </ScrollTrack>
              <ZoomColumn>
                <ZoomButton aria-label="拡大">
                  <svg width="11" height="11"><path d="M5.500 1v9M1 5.500h9" stroke="#222" strokeWidth="3" /></svg>
                </ZoomButton>
                <ZoomSlider type="range" aria-label="ズーム" min="0" max="100" value={zoom} onChange={e => setZoom(e.target.value)} />
                <ZoomButton aria-label="縮小">
                  <svg width="11" height="11"><path d="M1 5.500h9" stroke="#222" strokeWidth="3" /></svg>
                </ZoomButton>
              </ZoomColumn>
            </SideColumn>
          </ChartRow>

          <Navigator>
            <svg viewBox="13 733 1331 24">
              {MONTHS.map(([x, m]) => <line key={m} x1={x + 0.5} x2={x + 0.5} y1="733" y2="757" stroke="#bbb" />)}
              <polyline points={navLine} fill="none" stroke="#111" />
              {MONTHS.map(([x, m]) => (
                <g key={m}>
                  <rect x={x + 2} y="733" width="59" height="15" rx="4" fill="#858585" />
                  <text x={x + 4} y="745" fontSize="13" fill="#fff">{m}</text>
                </g>
              ))}
              <rect x={selStart} y="733" width={selEnd - selStart} height="24" fill="#bfd0ff" fillOpacity="0.68" />
            </svg>
            <RangeHandle type="range" aria-label="開始" min="0" max="1000" value={from} onChange={e => setFrom(+e.target.value)} />
            <RangeHandle type="range" aria-label="終了" min="0" max="1000" value={to} onChange={e => setTo(+e.target.value)} />
          </Navigator>
        </Body>
      </Frame>

      <TabBar>
        <Pager>
          <PagerButton aria-label="最初"><svg width="12" height="12"><path d="M1 0h2v12H1ZM12 0v12L4 6Z" fill="#222" /></svg></PagerButton>
          <PagerButton aria-label="前へ"><svg width="12" height="12"><path d="M9 1v10L2 6Z" fill="#222" /></svg></PagerButton>
          <PagerButton aria-label="次へ"><svg width="12" height="12"><path d="M3 0v12l7-6Z" fill="#222" /></svg></PagerButton>
          <PagerButton aria-label="最後"><svg width="12" height="12"><path d="M0 0v12l8-6ZM9 0h2v12H9Z" fill="#222" /></svg></PagerButton>
        </Pager>
        {TABS.map((tab, i) => (
          <Tab key={tab} $active={i === activeTab} onClick={() => setActiveTab(i)}>{tab}</Tab>
        ))}
        <TabSpill>AUD</TabSpill>
        <AddTab aria-label="タブを追加"><svg width="14" height="14"><path d="M7 1v12M1 7h12" stroke="#111" strokeWidth="4" /></svg></AddTab>
        <RoundKnob aria-label="メニュー" />
      </TabBar>
    </Page>;
}

export default App;
